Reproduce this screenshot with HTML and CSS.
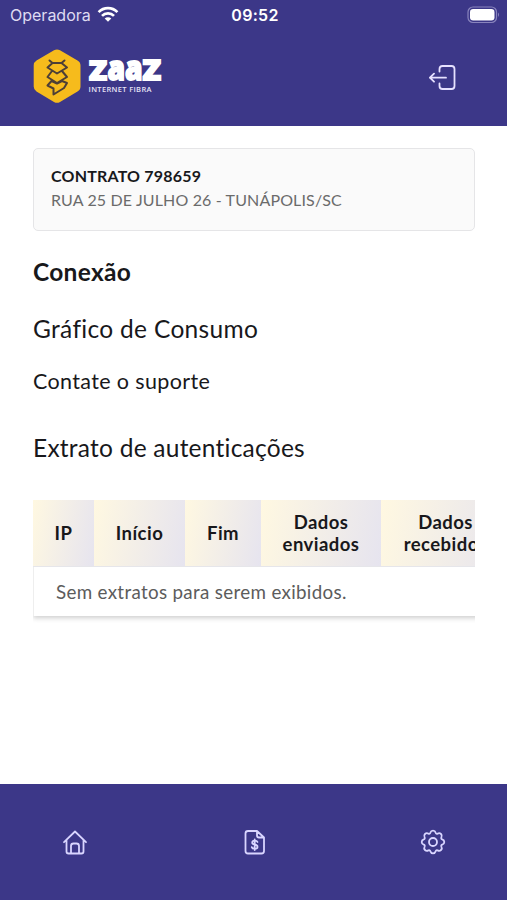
FILE: index.html
```html
<!DOCTYPE html>
<html lang="pt-BR">
<head>
<meta charset="utf-8">
<meta name="viewport" content="width=device-width, initial-scale=1">
<title>Conexão</title>
<link rel="stylesheet" href="styles.css">
</head>
<body>
<div class="app">
  <header class="header">
    <div class="status">
      <div class="carrier"><span class="operator">Operadora</span>
        <svg width="22" height="17" viewBox="0 0 22 17" fill="none" stroke="#fff" stroke-width="2.7"><path d="M1.6 6.1a13.2 13.2 0 0 1 18.800 0M5 9.900a8.400 8.400 0 0 1 12 0"/><path d="M7.700 12.500a4.700 4.700 0 0 1 6.600 0L11 15.800z" fill="#fff" stroke="none"/></svg>
      </div>
      <div class="clock">09:52</div>
      <svg class="battery" width="33" height="18" viewBox="0 0 33 18"><rect x="1" y="1" width="28.5" height="15.5" rx="5" fill="none" stroke="#8984bd" stroke-width="1.2"/><rect x="3" y="3" width="24.5" height="11.5" rx="3.2" fill="#fff"/><path d="M31 6.5q2 2.2 0 4.4z" fill="#8984bd"/></svg>
    </div>
    <div class="brandbar">
      <svg class="logo" width="132" height="56" viewBox="0 0 132 56">
        <path d="M21 1.300Q24 -.4 27 1.300L44.500 11.500Q47.500 13.200 47.500 16.500V37.500Q47.500 40.800 44.500 42.500L27 53Q24 54.700 21 53L3.500 42.500Q.7 40.800.7 37.500V16.500Q.7 13.200 3.500 11.500Z" fill="#f6bb1c"/>
        <path d="M16.500 11.500 19.500 14H28.500L31.500 11.500M19.500 14 14.500 18.500 24 24.500 34 18.500 28.500 14M19 22 14.500 28 24 34 34 28 29 22M18.500 32 14.500 36.500 20.500 39.500V45.500L31 39 34 34 29 32M18.500 32 24 34.500 29 32" fill="none" stroke="#4d3f36" stroke-width="2" stroke-linejoin="round" stroke-linecap="round"/>
        <g class="wordmark"><text x="56" y="31.300" font-size="26" textLength="18" lengthAdjust="spacingAndGlyphs">Z</text><text x="74.500" y="31.300" font-size="34" textLength="35" lengthAdjust="spacingAndGlyphs">aa</text><text x="109.500" y="31.300" font-size="28" textLength="18.500" lengthAdjust="spacingAndGlyphs">Z</text></g>
        <text class="tagline" x="55.500" y="42.500" textLength="63">INTERNET FIBRA</text>
      </svg>
      <svg class="logout" width="28" height="26" viewBox="0 0 28 26" fill="none" stroke="#e6e1ff" stroke-width="1.800" stroke-linecap="round" stroke-linejoin="round"><path d="M10.500 7.500V5Q10.500 2 13.500 2H22.500Q25.500 2 25.500 5V22Q25.500 25 22.500 25H13.500Q10.500 25 10.500 22V19.500M17 13.700H.900M5 9.700 .900 13.700 5 17.700"/></svg>
    </div>
  </header>
  <main class="content">
    <section class="contract"><div class="contract-id">CONTRATO 798659</div><div class="address">RUA 25 DE JULHO 26 - TUNÁPOLIS/SC</div></section>
    <h1>Conexão</h1>
    <h2 class="usage">Gráfico de Consumo</h2>
    <p class="support">Contate o suporte</p>
    <h2 class="extract">Extrato de autenticações</h2>
    <div class="table-scroll">
      <table>
        <colgroup><col class="c-ip"><col class="c-start"><col class="c-end"><col class="c-sent"><col class="c-received"></colgroup>
        <thead><tr><th>IP</th><th>Início</th><th>Fim</th><th>Dados<br>enviados</th><th>Dados<br>recebidos</th></tr></thead>
        <tbody><tr><td colspan="5">Sem extratos para serem exibidos.</td></tr></tbody>
      </table>
    </div>
  </main>
  <nav class="nav">
    <svg width="26" height="26" viewBox="0 0 26 26"><path d="M2 13.200 13 2.500 24 13.200M4.500 11V22.500Q4.500 24.500 6.500 24.500H19.500Q21.500 24.500 21.500 22.500V11M9 24V17Q9 14.500 11.500 14.500H14.500Q17 14.500 17 17V24"/></svg>
    <svg width="26" height="26" viewBox="0 0 26 26"><path d="M16 2H7Q4.500 2 4.500 4.500V22Q4.500 24.500 7 24.500H20.500Q23 24.500 23 22V8.500ZM16 2V6.500Q16 8.500 18 8.500H23M16.500 13Q16 11.700 13.700 11.700 11.200 11.700 11.200 13.700 11.200 15 13.700 15.500 16.500 16 16.500 17.900 16.500 19.700 13.700 19.700 11.200 19.700 10.800 18.200M13.700 10.300V21"/></svg>
    <svg width="26" height="26" viewBox="0 0 26 26"><path d="M10.300 3.800C11.200 1 14.800 1 15.700 3.800Q16.200 5.200 17.600 4.600C20.200 3.200 22.800 5.800 21.400 8.400Q20.800 9.800 22.200 10.300C25 11.200 25 14.800 22.200 15.700Q20.800 16.200 21.400 17.600C22.800 20.200 20.200 22.800 17.600 21.400Q16.200 20.800 15.700 22.200C14.800 25 11.200 25 10.300 22.200Q9.800 20.800 8.400 21.400C5.800 22.800 3.200 20.200 4.600 17.600Q5.200 16.200 3.800 15.700C1 14.800 1 11.200 3.800 10.300Q5.200 9.800 4.600 8.400C3.200 5.800 5.800 3.200 8.400 4.600Q9.800 5.200 10.300 3.800Z"/><circle cx="13" cy="13" r="4"/></svg>
  </nav>
</div>
</body>
</html>
```
FILE: styles.css
```css
* { box-sizing: border-box; }
body { margin: 0; background: #fff; font-family: Lato, sans-serif; font-variant-ligatures: none; color: #18181b; }
.app { height: 900px; display: flex; flex-direction: column; overflow: hidden; }
svg { display: block; flex: none; }
.header { height: 126px; background: #3c3788; color: #fff; flex: none; }
.status { height: 30px; display: grid; grid-template-columns: 1fr auto 1fr; align-items: center; padding: 0 7px 1px 10px; font-family: Inter, sans-serif; }
.carrier { display: flex; align-items: center; gap: 6px; font-size: 16px; color: #dedbf2; }
.clock { font-size: 16px; font-weight: 600; letter-spacing: .3px; }
.battery { justify-self: end; }
.brandbar { display: flex; justify-content: space-between; align-items: center; height: 94px; padding: 0 50px 0 33px; }
.wordmark { font-family: "Open Sans", sans-serif; font-weight: 800; fill: #fff; stroke: #fff; stroke-width: 1.8px; }
.tagline { font-family: "Open Sans", sans-serif; font-size: 7.5px; font-weight: 600; fill: #e6e3f5; }
.content { flex: 1; padding: 22px 32px 0 33px; min-height: 0; }
.contract { height: 83px; border: 1px solid #e5e5e7; border-radius: 5px; background: #fafafa; padding: 15px 17px; line-height: 24px; }
.contract-id { font-size: 16px; font-weight: 700; letter-spacing: .2px; }
.address { font-size: 16px; color: #6b6b6b; letter-spacing: .14px; }
h1, h2, p { margin: 0; white-space: nowrap; font-weight: 400; line-height: 32px; }
h1 { margin-top: 25px; font-size: 24.5px; font-weight: 700; letter-spacing: .3px; }
h2 { font-size: 24.5px; letter-spacing: .32px; }
.usage { margin-top: 25px; }
.support { margin-top: 20px; font-size: 21.5px; letter-spacing: .36px; }
.extract { margin-top: 35px; letter-spacing: .24px; }
.table-scroll { margin-top: 36px; overflow: hidden; height: 132px; }
table { width: 477px; table-layout: fixed; border-collapse: separate; border-spacing: 0; box-shadow: 0 2px 5px #0003; }
.c-ip { width: 61px; }
.c-start { width: 91px; }
.c-end { width: 76px; }
.c-sent { width: 120px; }
.c-received { width: 129px; }
th { height: 67px; padding: 0; font-size: 18.5px; line-height: 22px; font-weight: 700; letter-spacing: .45px; background: linear-gradient(100deg, #fff8e1, #e6e4ef); border-bottom: 1px solid #e6e6ea; }
td { height: 49px; padding: 0 22px; font-size: 18.8px; letter-spacing: .32px; color: #5c5c5c; border-left: 1px solid #eee; }
.nav { height: 116px; flex: none; background: #3c3788; display: flex; justify-content: space-between; align-items: center; padding: 0 61px 0 62px; }
.nav path, .nav circle { fill: none; stroke: #d9d5ff; stroke-width: 1.8px; stroke-linecap: round; stroke-linejoin: round; }
```
